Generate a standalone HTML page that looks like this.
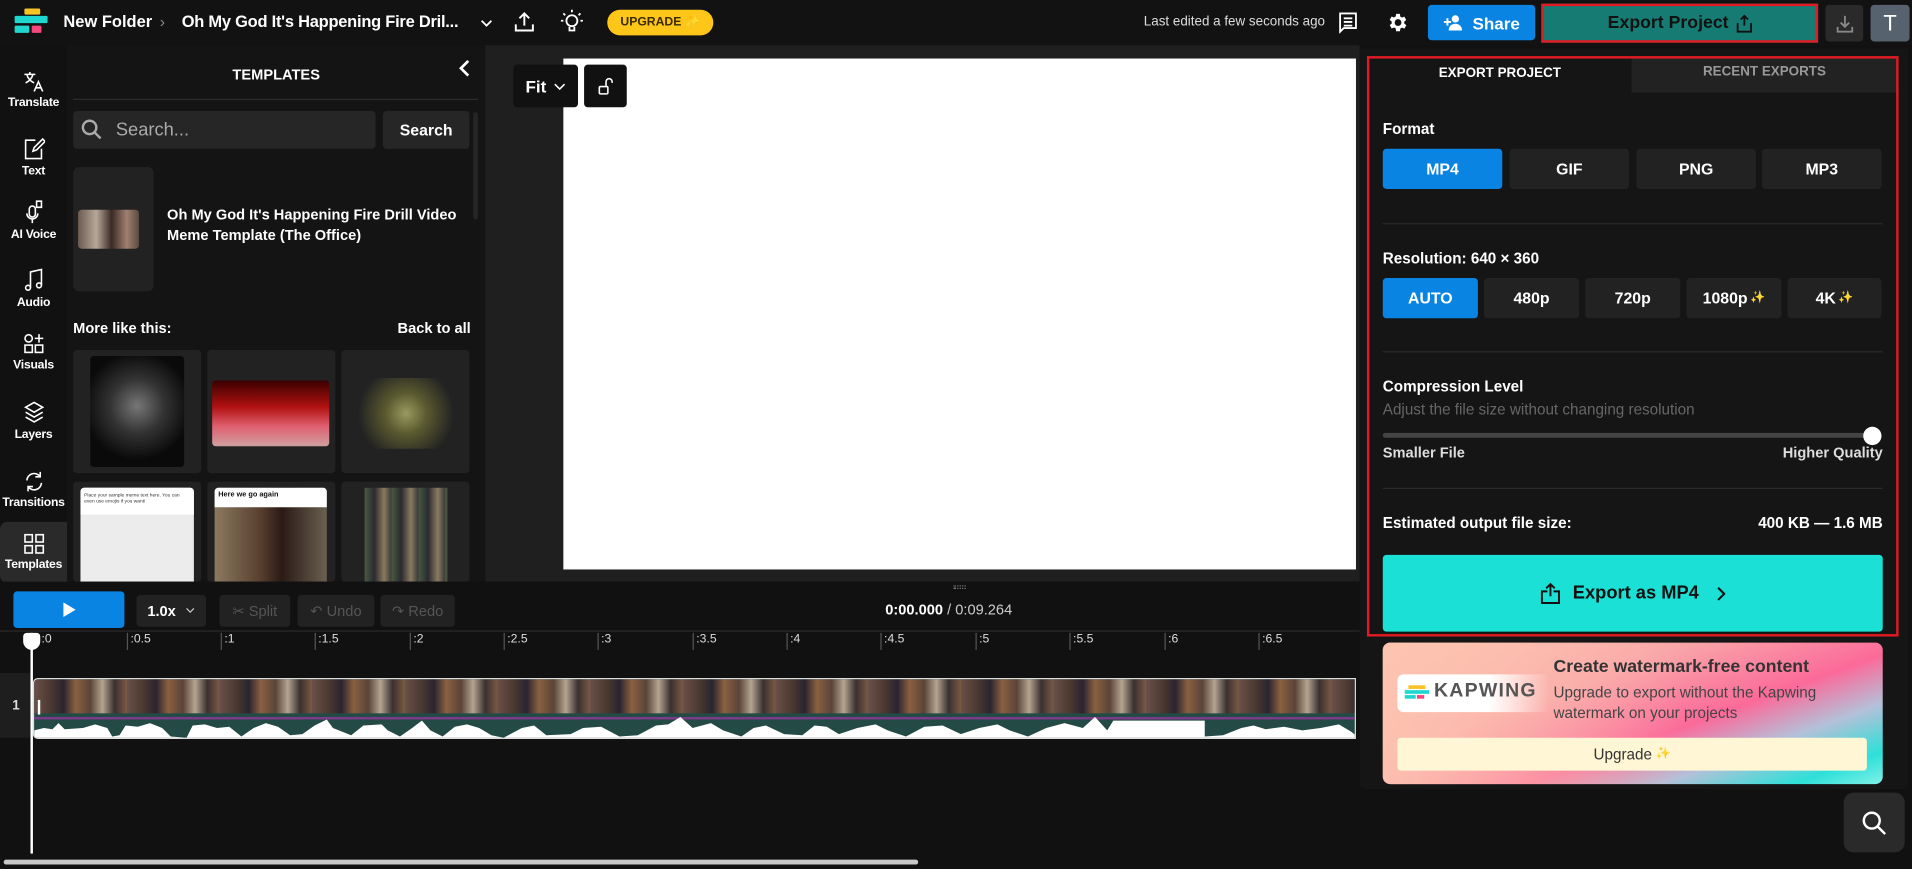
<!DOCTYPE html>
<html><head><meta charset="utf-8">
<style>
*{box-sizing:border-box;margin:0;padding:0}
html,body{width:1912px;height:869px;overflow:hidden;background:#111}
body{font-family:"Liberation Sans",Arial,sans-serif;color:#fff}
#root{position:absolute;left:0;top:0;width:1568px;height:713px;transform:scale(1.219388);transform-origin:0 0;background:#111;overflow:hidden}
.a{position:absolute}
.b{font-weight:bold}
.btn{position:absolute;display:flex;align-items:center;justify-content:center;border-radius:3px;font-weight:bold;font-size:13px}
.side{position:absolute;left:0;width:55px;text-align:center;font-size:10px;font-weight:bold;color:#fff;letter-spacing:-0.2px}
.side svg{display:block;margin:0 auto 3px}
.g{background:#222}
.tk{position:absolute;top:519px;height:14px;border-left:1px solid #555;font-size:10px;color:#ddd;padding-left:2px;line-height:11px}
</style></head><body>
<div id="root">
<!-- header -->
<div class="a" style="left:0;top:0;width:1568px;height:37px;background:#121212"></div>
<div class="a" style="left:20px;top:7px;width:13px;height:5px;background:#f7c325;border-radius:1px"></div>
<div class="a" style="left:12px;top:13px;width:27px;height:6px;background:#1fd7cf;border-radius:1px"></div>
<div class="a" style="left:12px;top:21px;width:12px;height:6px;background:#1fd7cf;border-radius:1px"></div>
<div class="a" style="left:26px;top:21px;width:8px;height:6px;background:#f4477c;border-radius:1px"></div>
<div class="a b" style="left:52px;top:10px;font-size:13.5px">New Folder</div>
<div class="a" style="left:131px;top:10px;font-size:13px;color:#888">›</div>
<div class="a b" style="left:149px;top:10px;font-size:13.5px;letter-spacing:-0.2px">Oh My God It's Happening Fire Dril...</div>
<svg class="a" style="left:393px;top:14px" width="12" height="10" viewBox="0 0 12 10"><path d="M2 3l4 4 4-4" stroke="#fff" stroke-width="1.5" fill="none"/></svg>
<svg class="a" style="left:420px;top:8px" width="20" height="20" viewBox="0 0 20 20" fill="none" stroke="#fff" stroke-width="1.6"><path d="M10 13V3M6 7l4-4 4 4M3 12v5h14v-5"/></svg>
<svg class="a" style="left:459px;top:7px" width="20" height="22" viewBox="0 0 20 22" fill="none" stroke="#fff" stroke-width="1.5"><circle cx="10" cy="10" r="4.5"/><path d="M8 15v3h4v-3M10 1v2M3 4l1.5 1.5M17 4l-1.5 1.5M1 10h2M17 10h2"/></svg>
<div class="a b" style="left:498px;top:8px;width:87px;height:21px;border-radius:11px;background:#ffc61a;color:#3a2a00;font-size:10px;display:flex;align-items:center;justify-content:center">UPGRADE <span style="color:#fff;margin-left:3px">✨</span></div>
<div class="a" style="left:938px;top:12px;font-size:11px;color:#ddd">Last edited a few seconds ago</div>
<svg class="a" style="left:1097px;top:9px" width="18" height="19" viewBox="0 0 18 19" fill="none" stroke="#fff" stroke-width="1.5"><path d="M2 2h13v12H5l-3 3z"/><path d="M5 6h7M5 9h7M5 12h7"/></svg>
<svg class="a" style="left:1137px;top:9px" width="19" height="19" viewBox="0 0 24 24"><path fill="#fff" d="M19.4 13a7.5 7.5 0 000-2l2.1-1.6-2-3.5-2.5 1a7 7 0 00-1.7-1L15 3h-4l-.4 2.7a7 7 0 00-1.7 1l-2.5-1-2 3.5L6.5 11a7.5 7.5 0 000 2l-2.1 1.6 2 3.5 2.5-1a7 7 0 001.7 1L11 21h4l.4-2.7a7 7 0 001.7-1l2.5 1 2-3.5zM13 15.5a3.5 3.5 0 110-7 3.5 3.5 0 010 7z" transform="translate(-1 0)"/></svg>
<div class="btn" style="left:1171px;top:4px;width:88px;height:29px;background:#0a84e3;font-size:14px"><svg style="margin-right:8px" width="16" height="13" viewBox="0 0 16 13" fill="#fff"><circle cx="9.5" cy="3.5" r="3"/><path d="M4 13c0-3.5 2.5-5.5 5.5-5.5S15 9.5 15 13z"/><path d="M3 3v6M0 6h6" stroke="#fff" stroke-width="1.6"/></svg>Share</div>
<div class="btn" style="left:1264px;top:3px;width:227px;height:32px;background:#167c73;border:2px solid #e01b24;border-radius:0;color:#111;font-size:14.5px;font-weight:bold">Export Project <svg style="margin-left:6px" width="13" height="15" viewBox="0 0 13 15" fill="none" stroke="#111" stroke-width="1.5"><path d="M6.5 9V1M3.5 4l3-3 3 3M1 7v7h11V7"/></svg></div>
<div class="btn" style="left:1497px;top:4px;width:31px;height:30px;background:#2a2a2a"><svg width="14" height="15" viewBox="0 0 14 15" fill="none" stroke="#888" stroke-width="1.5"><path d="M7 1v9M3.5 6.5L7 10l3.5-3.5M1 10v4h12v-4"/></svg></div>
<div class="btn" style="left:1534px;top:4px;width:32px;height:30px;background:#56626e;font-weight:normal;font-size:18px">T</div>

<!-- sidebar -->
<div class="side" style="top:58px"><svg width="18" height="18" viewBox="0 0 18 18" fill="none" stroke="#fff" stroke-width="1.3"><path d="M1 3h9M5.5 1v2M3 3c1 4 4 6 6 7M8 3c-1 4-4 6-6 7M9 17l3.5-8 3.5 8M10.2 14h4.6"/></svg>Translate</div>
<div class="side" style="top:112px"><svg width="18" height="20" viewBox="0 0 18 20" fill="none" stroke="#fff" stroke-width="1.3"><path d="M10 3H2v15h13v-8M8 12l1-3 7-7 2 2-7 7z"/></svg>Text</div>
<div class="side" style="top:164px"><svg width="18" height="20" viewBox="0 0 18 20" fill="none" stroke="#fff" stroke-width="1.3"><rect x="5" y="5" width="5" height="9" rx="2.5"/><path d="M3 11a4.5 4.5 0 009 0M7.5 16v3M11 1h4v5h-4z"/></svg>AI Voice</div>
<div class="side" style="top:220px"><svg width="18" height="20" viewBox="0 0 18 20" fill="none" stroke="#fff" stroke-width="1.3"><path d="M6 16V3l9-2v13"/><circle cx="4" cy="16" r="2"/><circle cx="13" cy="14" r="2"/></svg>Audio</div>
<div class="side" style="top:273px"><svg width="18" height="18" viewBox="0 0 18 18" fill="none" stroke="#fff" stroke-width="1.3"><circle cx="4.5" cy="4.5" r="3"/><path d="M13 1v7M9.5 4.5h7"/><rect x="1.5" y="10" width="6" height="6"/><rect x="10" y="10" width="6" height="6"/></svg>Visuals</div>
<div class="side" style="top:328px"><svg width="18" height="20" viewBox="0 0 18 20" fill="none" stroke="#fff" stroke-width="1.3"><path d="M9 2l7 4-7 4-7-4zM2 10l7 4 7-4M2 14l7 4 7-4"/></svg>Layers</div>
<div class="side" style="top:386px"><svg width="18" height="18" viewBox="0 0 18 18" fill="none" stroke="#fff" stroke-width="1.3"><path d="M3 8a6 6 0 0111-3M15 10a6 6 0 01-11 3M14 1v4h-4M4 17v-4h4"/></svg>Transitions</div>
<div class="a" style="left:0;top:428px;width:57px;height:50px;background:#2a2a2a;border-radius:6px 0 0 6px"></div>
<div class="side" style="top:437px"><svg width="18" height="18" viewBox="0 0 18 18" fill="none" stroke="#fff" stroke-width="1.3"><rect x="1.5" y="1.5" width="6" height="6"/><rect x="10.5" y="1.5" width="6" height="6"/><rect x="1.5" y="10.5" width="6" height="6"/><rect x="10.5" y="10.5" width="6" height="6"/></svg>Templates</div>

<!-- templates panel -->
<div class="a" style="left:55px;top:37px;width:343px;height:440px;background:#141414"></div>
<div class="a b" style="left:55px;top:54px;width:343px;text-align:center;font-size:12px">TEMPLATES</div>
<svg class="a" style="left:375px;top:48px" width="12" height="16" viewBox="0 0 12 16"><path d="M9 2L3 8l6 6" stroke="#fff" stroke-width="2.2" fill="none"/></svg>
<div class="a" style="left:60px;top:81px;width:332px;height:1px;background:#2c2c2c"></div>
<div class="a" style="left:60px;top:91px;width:248px;height:31px;background:#262626;border-radius:3px"></div>
<svg class="a" style="left:66px;top:97px" width="18" height="18" viewBox="0 0 18 18" fill="none" stroke="#aaa" stroke-width="2"><circle cx="7.5" cy="7.5" r="5.5"/><path d="M11.5 11.5l5 5"/></svg>
<div class="a" style="left:95px;top:98px;font-size:15px;color:#aaa">Search...</div>
<div class="btn" style="left:314px;top:91px;width:71px;height:31px;background:#262626;font-size:13px">Search</div>
<div class="a" style="left:388px;top:92px;width:4px;height:88px;background:#252525;border-radius:2px"></div>
<div class="a" style="left:60px;top:137px;width:66px;height:102px;background:#222;border-radius:5px"></div>
<div class="a" style="left:64px;top:172px;width:50px;height:32px;border-radius:3px;background:linear-gradient(90deg,#6a5a50,#b8a89a 30%,#3a2a25 55%,#a08070 80%,#5a4a40)"></div>
<div class="a b" style="left:137px;top:168px;width:250px;font-size:12px;line-height:17px">Oh My God It's Happening Fire Drill Video Meme Template (The Office)</div>
<div class="a b" style="left:60px;top:262px;font-size:12px">More like this:</div>
<div class="a b" style="left:326px;top:262px;font-size:12px">Back to all</div>
<div class="a" style="left:60px;top:287px;width:105px;height:101px;background:#222;border-radius:3px"></div>
<div class="a" style="left:170px;top:287px;width:105px;height:101px;background:#222;border-radius:3px"></div>
<div class="a" style="left:280px;top:287px;width:105px;height:101px;background:#222;border-radius:3px"></div>
<div class="a" style="left:60px;top:395px;width:105px;height:82px;background:#222;border-radius:3px"></div>
<div class="a" style="left:170px;top:395px;width:105px;height:82px;background:#222;border-radius:3px"></div>
<div class="a" style="left:280px;top:395px;width:105px;height:82px;background:#222;border-radius:3px"></div>
<div class="a" style="left:74px;top:292px;width:77px;height:91px;background:radial-gradient(circle at 50% 45%,#777 0,#333 35%,#0a0a0a 70%);border-radius:3px"></div>
<div class="a" style="left:174px;top:312px;width:96px;height:54px;border-radius:3px;background:linear-gradient(180deg,#3a0000,#b01010 40%,#e06070 70%,#d0a0a0)"></div>
<div class="a" style="left:285px;top:310px;width:96px;height:58px;border-radius:3px;background:radial-gradient(circle at 50% 50%,#9a9a60 0,#5a5a30 30%,#222 70%)"></div>
<div class="a" style="left:66px;top:400px;width:93px;height:77px;background:#ececec;border-radius:3px 3px 0 0"></div>
<div class="a" style="left:66px;top:400px;width:93px;height:22px;background:#fff;border-radius:3px 3px 0 0;font-size:4px;color:#333;padding:3px">Place your sample meme text here. You can even use emojis if you want!</div>
<div class="a" style="left:176px;top:400px;width:92px;height:77px;background:linear-gradient(90deg,#8a7a60,#5a4030 40%,#2a1a15 60%,#6a6050);border-radius:3px 3px 0 0"></div>
<div class="a" style="left:176px;top:400px;width:92px;height:16px;background:#fff;border-radius:3px 3px 0 0;font-size:6px;color:#111;font-weight:bold;padding:3px">Here we go again</div>
<div class="a" style="left:299px;top:400px;width:68px;height:77px;background:repeating-linear-gradient(90deg,#4a5a40 0,#2a2a30 8px,#8a7a60 16px,#3a3a3a 22px)"></div>

<!-- canvas area -->
<div class="a" style="left:398px;top:37px;width:717px;height:440px;background:#1f1f1f"></div>
<div class="a" style="left:462px;top:48px;width:650px;height:419px;background:#fff"></div>
<div class="btn" style="left:421px;top:53px;width:53px;height:35px;background:#111;font-size:14px">Fit <svg style="margin-left:6px" width="10" height="8" viewBox="0 0 10 8"><path d="M1 2l4 4 4-4" stroke="#fff" stroke-width="1.3" fill="none"/></svg></div>
<div class="btn" style="left:479px;top:53px;width:35px;height:35px;background:#111"><svg width="14" height="16" viewBox="0 0 14 16" fill="none" stroke="#fff" stroke-width="1.3"><rect x="1.5" y="8" width="7" height="6" rx="1"/><path d="M7 8V4a2.5 2.5 0 015 0v1"/></svg></div>

<!-- timeline -->
<div class="a" style="left:0;top:477px;width:1115px;height:236px;background:#111"></div>
<div class="a" style="left:782px;top:480px;width:10px;height:3px;border-top:1px dotted #777;border-bottom:1px dotted #777"></div>
<div class="btn" style="left:11px;top:485px;width:91px;height:30px;background:#0a84e3"><svg width="12" height="14" viewBox="0 0 12 14"><path d="M1 1l10 6-10 6z" fill="#fff"/></svg></div>
<div class="btn" style="left:112px;top:488px;width:57px;height:26px;background:#222;font-size:12px">1.0x<svg style="margin-left:8px" width="8" height="6" viewBox="0 0 8 6"><path d="M1 1l3 3 3-3" stroke="#ccc" fill="none"/></svg></div>
<div class="btn" style="left:180px;top:488px;width:58px;height:26px;background:#222;color:#555;font-size:12px;font-weight:normal">✂ Split</div>
<div class="btn" style="left:244px;top:488px;width:63px;height:26px;background:#222;color:#555;font-size:12px;font-weight:normal">↶ Undo</div>
<div class="btn" style="left:312px;top:488px;width:61px;height:26px;background:#222;color:#555;font-size:12px;font-weight:normal">↷ Redo</div>
<div class="a" style="left:726px;top:493px;font-size:12px"><b>0:00.000</b> <span style="color:#ccc">/ 0:09.264</span></div>
<div class="a" style="left:0;top:517px;width:1115px;height:1px;background:#2a2a2a"></div>
<div class="tk" style="left:32px;border:none">:0</div>
<div class="tk" style="left:104px">:0.5</div>
<div class="tk" style="left:181px">:1</div>
<div class="tk" style="left:258px">:1.5</div>
<div class="tk" style="left:336px">:2</div>
<div class="tk" style="left:413px">:2.5</div>
<div class="tk" style="left:490px">:3</div>
<div class="tk" style="left:568px">:3.5</div>
<div class="tk" style="left:645px">:4</div>
<div class="tk" style="left:722px">:4.5</div>
<div class="tk" style="left:800px">:5</div>
<div class="tk" style="left:877px">:5.5</div>
<div class="tk" style="left:955px">:6</div>
<div class="tk" style="left:1032px">:6.5</div>
<div class="a" style="left:0;top:552px;width:26px;height:53px;background:#1e1e1e"></div>
<div class="a b" style="left:10px;top:573px;font-size:11px;color:#ddd">1</div>
<div class="a" style="left:27px;top:556px;width:1085px;height:50px;border:1px solid #ddd;border-radius:4px 0 0 4px;overflow:hidden;background:#234a44">
 <div style="height:28px;background:repeating-linear-gradient(90deg,#6a5048 0,#4a3830 14px,#2a2430 24px,#8a6040 34px,#5a4438 46px,#b4a490 56px,#3a3030 66px,#7a5a44 76px)"></div>
 <svg width="1085" height="21" viewBox="0 0 1085 21" style="display:block">
 <rect x="0" y="3" width="1085" height="2" fill="#7b3b8a"/>
 <path fill="#fff" d="M0 21L0 14L8 12L15 13L20 8L25 13L40 12L50 9L60 12L64 19L70 18L75 10L85 11L95 8L105 12L112 19L125 20L130 10L140 9L150 12L160 11L170 19L180 12L190 8L200 11L210 18L220 17L230 10L240 5L245 12L260 18L270 10L285 9L290 14L300 19L310 12L318 6L325 14L335 19L345 11L355 9L365 12L375 18L385 20L400 12L410 10L420 18L440 17L450 12L465 11L480 19L495 18L510 10L520 9L530 3L540 12L555 8L565 14L580 19L590 12L600 10L615 17L630 18L640 10L650 11L660 17L675 12L690 9L700 14L715 19L730 11L745 10L760 17L775 12L790 9L800 14L815 19L830 12L845 8L860 12L870 3L880 14L885 6L960 6L960 19L975 18L990 12L1000 10L1010 13L1025 11L1040 14L1055 12L1070 9L1080 15L1085 19L1085 21Z"/>
 </svg>
</div>
<div class="a" style="left:31px;top:574px;width:2px;height:12px;background:#fff"></div>
<div class="a" style="left:25px;top:519px;width:2px;height:181px;background:#fff"></div>
<div class="a" style="left:19px;top:519px;width:14px;height:14px;background:#fff;border-radius:3px 3px 7px 7px"></div>
<div class="a" style="left:3px;top:705px;width:750px;height:4px;background:#c8c8c8;border-radius:2px"></div>

<!-- export panel -->
<div class="a" style="left:1115px;top:40px;width:450px;height:607px;background:#151515;border-radius:0 0 4px 4px"></div>
<div class="a" style="left:1338px;top:47px;width:218px;height:29px;background:#222"></div>
<div class="a b" style="left:1122px;top:54px;width:216px;text-align:center;font-size:11px">EXPORT PROJECT</div>
<div class="a b" style="left:1338px;top:53px;width:218px;text-align:center;font-size:11px;color:#999">RECENT EXPORTS</div>
<div class="a" style="left:1121px;top:46px;width:436px;height:476px;border:2px solid #e01b24"></div>
<div class="a b" style="left:1134px;top:99px;font-size:12.5px">Format</div>
<div class="btn" style="left:1134px;top:122px;width:98px;height:33px;background:#0a84e3">MP4</div>
<div class="btn g" style="left:1238px;top:122px;width:98px;height:33px">GIF</div>
<div class="btn g" style="left:1342px;top:122px;width:98px;height:33px">PNG</div>
<div class="btn g" style="left:1445px;top:122px;width:98px;height:33px">MP3</div>
<div class="a" style="left:1134px;top:183px;width:410px;height:1px;background:#2a2a2a"></div>
<div class="a b" style="left:1134px;top:205px;font-size:12.5px">Resolution: 640 × 360</div>
<div class="btn" style="left:1134px;top:228px;width:78px;height:33px;background:#0a84e3">AUTO</div>
<div class="btn g" style="left:1217px;top:228px;width:78px;height:33px">480p</div>
<div class="btn g" style="left:1300px;top:228px;width:78px;height:33px">720p</div>
<div class="btn g" style="left:1383px;top:228px;width:78px;height:33px">1080p<span style="font-size:10px;margin-left:2px">✨</span></div>
<div class="btn g" style="left:1466px;top:228px;width:77px;height:33px">4K<span style="font-size:10px;margin-left:2px">✨</span></div>
<div class="a" style="left:1134px;top:288px;width:410px;height:1px;background:#2a2a2a"></div>
<div class="a b" style="left:1134px;top:310px;font-size:12.5px">Compression Level</div>
<div class="a" style="left:1134px;top:329px;font-size:12.5px;color:#666">Adjust the file size without changing resolution</div>
<div class="a" style="left:1134px;top:355px;width:405px;height:4px;background:#444;border-radius:2px"></div>
<div class="a" style="left:1528px;top:350px;width:15px;height:15px;background:#fff;border-radius:50%"></div>
<div class="a b" style="left:1134px;top:364px;font-size:12px;color:#ddd">Smaller File</div>
<div class="a b" style="left:1438px;top:364px;width:106px;text-align:right;font-size:12px;color:#ddd">Higher Quality</div>
<div class="a" style="left:1134px;top:400px;width:410px;height:1px;background:#2a2a2a"></div>
<div class="a b" style="left:1134px;top:422px;font-size:12.5px">Estimated output file size:</div>
<div class="a b" style="left:1400px;top:422px;width:144px;text-align:right;font-size:12.5px">400 KB — 1.6 MB</div>
<div class="btn" style="left:1134px;top:455px;width:410px;height:63px;background:#1ae0d5;color:#111;font-size:15px"><svg style="margin-right:10px" width="17" height="18" viewBox="0 0 17 18" fill="none" stroke="#111" stroke-width="1.6"><path d="M8.5 11V1M5 4.5L8.5 1 12 4.5M6 7H1.5v9.5h14V7H11"/></svg>Export as MP4<svg style="margin-left:14px" width="8" height="12" viewBox="0 0 8 12"><path d="M2 1l5 5-5 5" stroke="#111" stroke-width="1.7" fill="none"/></svg></div>
<div class="a" style="left:1134px;top:527px;width:410px;height:116px;border-radius:6px;background:linear-gradient(160deg,#fdc4b0 0%,#f9a5a8 35%,#fb6a9a 60%,#b4c0d8 75%,#2ee0d8 90%,#80f0e8 100%)"></div>
<div class="a" style="left:1134px;top:527px;width:410px;height:116px;border-radius:6px;background:linear-gradient(90deg,rgba(253,196,176,.9) 0%,rgba(253,196,176,.3) 40%,rgba(255,255,255,0) 60%)"></div>
<div class="a" style="left:1146px;top:553px;width:125px;height:31px;border-radius:5px;background:linear-gradient(90deg,#fff 60%,rgba(255,255,255,0))"></div>
<div class="a" style="left:1155px;top:562px;width:14px;height:3px;background:#f7c325"></div>
<div class="a" style="left:1152px;top:566px;width:20px;height:3px;background:#1fd7cf"></div>
<div class="a" style="left:1152px;top:570px;width:9px;height:3px;background:#1fd7cf"></div>
<div class="a" style="left:1162px;top:570px;width:6px;height:3px;background:#f4477c"></div>
<div class="a b" style="left:1176px;top:558px;font-size:16px;color:#555;letter-spacing:1px">KAPWING</div>
<div class="a b" style="left:1274px;top:539px;font-size:14.5px;color:#333">Create watermark-free content</div>
<div class="a" style="left:1274px;top:560px;width:265px;font-size:12.5px;line-height:17px;color:#444">Upgrade to export without the Kapwing watermark on your projects</div>
<div class="btn" style="left:1146px;top:605px;width:385px;height:27px;background:#fff6d6;color:#333;font-weight:normal;font-size:12.5px">Upgrade <span style="font-size:10px;margin-left:3px">✨</span></div>
<div class="btn" style="left:1512px;top:650px;width:50px;height:49px;background:#2a2a2a;border-radius:8px"><svg width="22" height="22" viewBox="0 0 22 22" fill="none" stroke="#fff" stroke-width="2"><circle cx="9" cy="9" r="6.5"/><path d="M14 14l6 6"/></svg></div>
</div>
</body></html>
